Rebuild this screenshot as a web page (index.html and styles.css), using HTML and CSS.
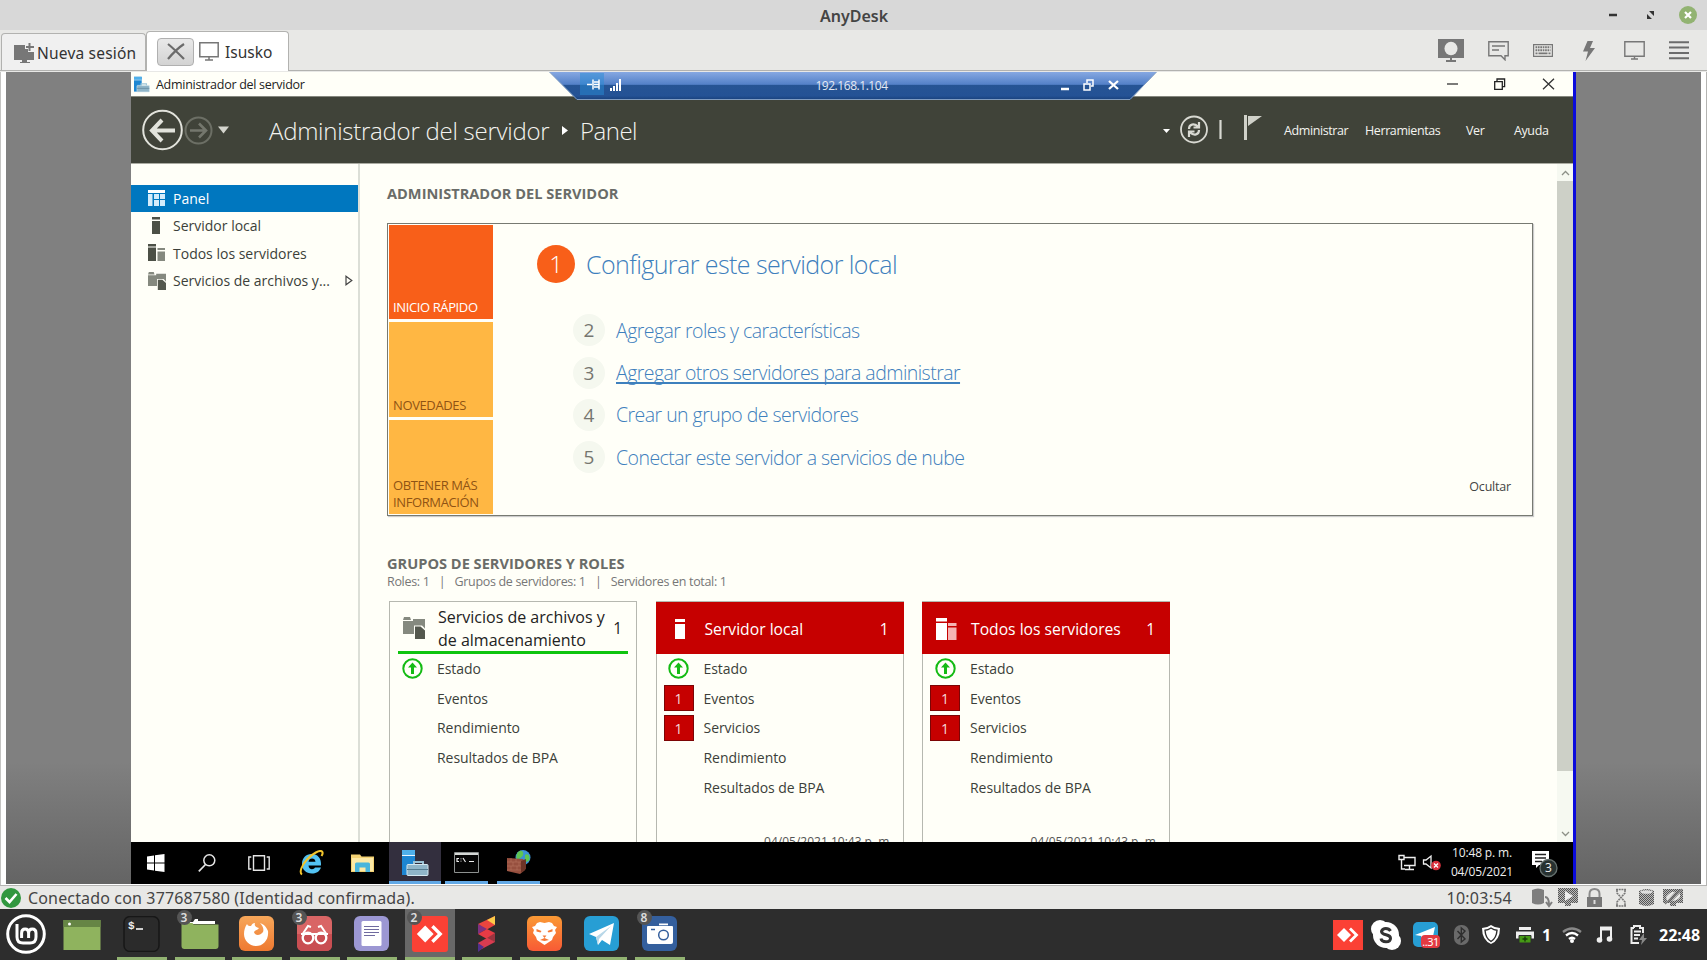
FILE: index.html
```html
<!DOCTYPE html>
<html lang="es">
<head>
<meta charset="utf-8">
<title>AnyDesk</title>
<link rel="stylesheet" href="styles.css">
</head>
<body>
<svg class="defs" width="0" height="0">
  <symbol id="srv" viewBox="0 0 27 26"><path d="M0 0h13v25H0z" fill="#1d86d2"/><path d="M0 0h13v5H0z" fill="#4fb0ea"/><path d="M0 5.500h13" stroke="#e8f6ff"/><path d="M12 15v-3h9v3" fill="none" stroke="#9cc4d6" stroke-width="2"/><rect x="5" y="14.500" width="21" height="11" rx="1" fill="#8fb5c8" stroke="#d5e8f0"/><path d="M5 19.500h21" stroke="#557c90"/></symbol>
  <symbol id="arrowup" viewBox="0 0 21 21"><circle cx="10.500" cy="10.500" r="9.200" fill="#fffff8" stroke="#14bb14" stroke-width="2"/><path d="M10.500 4.500l4.500 5h-3v6.500h-3V9.500H6z" fill="#14bb14"/></symbol>
  <symbol id="files" viewBox="0 0 22 22"><path d="M1 0h6l1 3H0zM0 4h10V2h12v15H0z" fill="#85897f"/><path d="M11 8.500h8l3 3V22H11z" fill="#fffff8"/><path d="M12 9.500h5.500l4.500 4V22H12z" fill="#54584e"/></symbol>
  <symbol id="anydesk" viewBox="0 0 30 30"><path d="M0 0h30v30H0z" fill="#fb4135"/><path d="M11 8l7 7-7 7-7-7z" fill="#fff"/><path d="M17 8.500l6.500 6.500-6.500 6.500" fill="none" stroke="#fff" stroke-width="2.800"/></symbol>
</svg>

<header class="titlebar">
  <span class="title">AnyDesk</span>
  <svg class="wm" width="90" height="20" viewBox="0 0 90 20"><path d="M2 10h8" stroke="#333" stroke-width="2.500"/><path d="M42 6h5v5zM40 9v5h5z" fill="#333"/><circle cx="81" cy="10" r="9" fill="#92b372"/><path d="M78 7l6 6m0-6l-6 6" stroke="#fff" stroke-width="2.200"/></svg>
</header>

<nav class="tabs">
  <div class="tab tab-new">
    <svg width="21" height="20" viewBox="0 0 21 20"><path d="M0 2h11v4h3v3h6v8H0zM8 17h5v2h3v1H6v-1h2z" fill="#777"/><path d="M15.500 0v8M12 4h8" stroke="#777" stroke-width="2"/></svg>
    <span>Nueva sesión</span>
  </div>
  <div class="tab tab-on">
    <span class="close"><svg width="18" height="17" viewBox="0 0 18 17"><path d="M1 1c5 4 10 9 16 15M17 1C11 5 6 10 1 16" stroke="#6b6b6b" stroke-width="2.200" fill="none"/></svg></span>
    <svg class="mon" width="20" height="19" viewBox="0 0 20 19"><path d="M.8.800h18.400v14H.8zM10 15v3M6 18h8" fill="none" stroke="#777" stroke-width="1.500"/></svg>
    <span>Isusko</span>
  </div>
  <div class="tools">
    <svg width="26" height="23" viewBox="0 0 26 23"><path d="M0 0h26v19H0z" fill="#777"/><ellipse cx="13" cy="9.500" rx="6.500" ry="6.800" fill="#e8e8e6"/><path d="M13 18v4M8 22h10" stroke="#777" stroke-width="2"/></svg>
    <svg width="21" height="20" viewBox="0 0 21 20"><path d="M.8.800h19.400v14H17v4l-4-4H.8zM4 5h13M4 9h7" fill="none" stroke="#777" stroke-width="1.400"/></svg>
    <svg width="20" height="13" viewBox="0 0 20 13"><path d="M.6.600h18.800v11.800H.6z" fill="none" stroke="#777" stroke-width="1.200"/><path d="M2.500 3.300h15M2.500 6.300h15" stroke="#777" stroke-width="1.900" stroke-dasharray="1.700 .7"/><path d="M2.500 9.400h2m1 0h9m1 0h2" stroke="#777" stroke-width="1.800"/></svg>
    <svg width="12" height="20" viewBox="0 0 12 20"><path d="M4.500 0H10L7 7h5L2.500 20 5 10.500H0z" fill="#777"/></svg>
    <svg width="21" height="19" viewBox="0 0 21 19"><path d="M.8.800h19.400v14.500H.8zM10.500 15v3M7 18h7" fill="none" stroke="#777" stroke-width="1.400"/></svg>
    <svg width="20" height="19" viewBox="0 0 20 19"><path d="M0 1.200h20M0 6.600h20M0 12h20M0 17.300h20" stroke="#6c6c6c" stroke-width="2"/></svg>
  </div>
</nav>

<main class="viewport">
  <section class="remote">
    <div class="wintitle">
      <svg width="16" height="17"><use href="#srv"/></svg>
      <span>Administrador del servidor</span>
      <svg class="winbtn" width="108" height="12" viewBox="0 0 108 12"><path d="M0 6h11" stroke="#333" stroke-width="1.300"/><path d="M47.700 3.700h7.600v7.600h-7.600zM50 3.500V1h7.600v7.600H55.500" fill="none" stroke="#222" stroke-width="1.300"/><path d="M96 .8l11 10.400M107 .8L96 11.200" stroke="#333" stroke-width="1.300"/></svg>
      <div class="rdp">
        <svg class="rdpshape" width="608" height="28" viewBox="0 0 608 28"><defs><linearGradient id="rg" x1="0" y1="0" x2="0" y2="1"><stop offset="0" stop-color="#86a8e2"/><stop offset=".44" stop-color="#5481c8"/><stop offset=".48" stop-color="#265494"/><stop offset=".85" stop-color="#245295"/><stop offset="1" stop-color="#173f79"/></linearGradient></defs><path d="M.5 0h607L581 28H28z" fill="url(#rg)"/><path d="M.5 0L28 27.500h553L607.500 0" fill="none" stroke="#809cc0"/><path d="M31 1h24v22H31z" fill="#278bd5" opacity=".5"/><path d="M38 12.500h5m1-5v10m1-5h5m0-5v10M45 10h5m-5 5h5" stroke="#fff" stroke-width="1.500"/><path d="M62 19v-3m3 3v-5m3 5V11m3 8V7" stroke="#fff" stroke-width="2"/><path d="M512 17h8" stroke="#fff" stroke-width="2.500"/><path d="M535 12h6v6h-6zm3-1V8h6v6h-2" fill="none" stroke="#fff" stroke-width="1.500"/><path d="M560 9l9 8m0-8l-9 8" stroke="#fff" stroke-width="2.300"/></svg>
        <span class="ip">192.168.1.104</span>
      </div>
    </div>

    <div class="head">
      <svg width="98" height="42" viewBox="0 0 98 42"><circle cx="20.500" cy="21" r="19.300" fill="none" stroke="#e2e3dc" stroke-width="2"/><path d="M9.500 21.500H33M20 11L10 21.500 20 32" fill="none" stroke="#e2e3dc" stroke-width="4"/><circle cx="56.500" cy="21.500" r="13" fill="none" stroke="#6c6f65" stroke-width="2"/><path d="M48 21.500h15M57 14.500l7 7-7 7" fill="none" stroke="#74776d" stroke-width="2.600"/><path d="M76 17.500h11l-5.500 7z" fill="#d4d5ce"/></svg>
      <h1>Administrador del servidor</h1>
      <svg class="crumb" width="6" height="9" viewBox="0 0 6 9"><path d="M0 0l6 4.500L0 9z" fill="#fff"/></svg>
      <span class="where">Panel</span>
      <svg class="status" width="100" height="32" viewBox="0 0 100 32"><path d="M0 15h7l-3.500 4z" fill="#fff"/><circle cx="31" cy="15.500" r="13" fill="none" stroke="#d8d9d2" stroke-width="1.800"/><path d="M26 15c0-5 5-6 9-2.500M36 16c0 5-5 6-9 2.500M36 8v5.500h-5.500M26 23v-5.500h5.500" fill="none" stroke="#d8d9d2" stroke-width="2.200"/><path d="M57.500 6v19" stroke="#d8d9d2" stroke-width="2.200"/><path d="M81 1h3v25h-3zM85 2h14L85 12z" fill="#d0d1c9"/></svg>
      <span class="m m1">Administrar</span><span class="m m2">Herramientas</span><span class="m m3">Ver</span><span class="m m4">Ayuda</span>
    </div>

    <div class="body">
      <aside class="side">
        <div class="nav on"><svg width="18" height="17" viewBox="0 0 18 17"><path d="M0 0h17v3H0z" fill="#fff"/><path d="M0 4h4.500v12H0zM6 4h5v5H6zM12 4h5v5h-5zM6 10h5v6H6zM12 10h5v6h-5z" fill="#d4ecfb"/></svg><span>Panel</span></div>
        <div class="nav"><svg width="18" height="18" viewBox="0 0 18 18"><path d="M4 0h8v2.500H4zM4 4h8v13H4z" fill="#4c5046"/></svg><span>Servidor local</span></div>
        <div class="nav"><svg width="18" height="18" viewBox="0 0 18 18"><path d="M0 0h8v2.500H0zM0 3.500h8V17H0z" fill="#4c5046"/><path d="M9.500 4H17v2H9.500zM9.500 7.500H17V17H9.500z" fill="#85897f"/></svg><span>Todos los servidores</span></div>
        <div class="nav"><svg width="18" height="18"><use href="#files"/></svg><span>Servicios de archivos y...</span><svg class="more" width="8" height="11" viewBox="0 0 8 11"><path d="M1 1.300L6.800 5.500 1 9.700z" fill="none" stroke="#444" stroke-width="1.200"/></svg></div>
      </aside>

      <div class="content">
        <h2 class="h-a">ADMINISTRADOR DEL SERVIDOR</h2>
        <div class="welcome">
          <div class="tiles">
            <div class="tile hot"><span>INICIO RÁPIDO</span></div>
            <div class="tile"><span>NOVEDADES</span></div>
            <div class="tile"><span>OBTENER MÁS<br>INFORMACIÓN</span></div>
          </div>
          <div class="steps">
            <div class="first"><b>1</b><a>Configurar este servidor local</a></div>
            <div class="step"><b>2</b><a>Agregar roles y características</a></div>
            <div class="step"><b>3</b><a class="hover">Agregar otros servidores para administrar</a></div>
            <div class="step"><b>4</b><a>Crear un grupo de servidores</a></div>
            <div class="step"><b>5</b><a>Conectar este servidor a servicios de nube</a></div>
          </div>
          <span class="hide">Ocultar</span>
        </div>

        <h2 class="h-b">GRUPOS DE SERVIDORES Y ROLES</h2>
        <div class="totals"><span>Roles: 1</span><i>|</i><span>Grupos de servidores: 1</span><i>|</i><span>Servidores en total: 1</span></div>
        <div class="cards">
          <div class="card ok">
            <div class="chead"><svg width="22" height="22"><use href="#files"/></svg><span class="ct">Servicios de archivos y<br>de almacenamiento</span><span class="num">1</span></div>
            <div class="row"><svg width="21" height="21"><use href="#arrowup"/></svg><span>Estado</span></div>
            <div class="row"><span>Eventos</span></div>
            <div class="row"><span>Rendimiento</span></div>
            <div class="row"><span>Resultados de BPA</span></div>
          </div>
          <div class="card bad">
            <div class="chead"><svg width="22" height="22" viewBox="0 0 22 22"><path d="M5 1h10v3H5zM5 6h10v15H5z" fill="#fff"/></svg><span class="ct">Servidor local</span><span class="num">1</span></div>
            <div class="row"><svg width="21" height="21"><use href="#arrowup"/></svg><span>Estado</span></div>
            <div class="row"><em>1</em><span>Eventos</span></div>
            <div class="row"><em>1</em><span>Servicios</span></div>
            <div class="row"><span>Rendimiento</span></div>
            <div class="row"><span>Resultados de BPA</span></div>
            <div class="stamp">04/05/2021 10:43 p. m.</div>
          </div>
          <div class="card bad">
            <div class="chead"><svg width="22" height="22" viewBox="0 0 22 22"><path d="M0 0h11v3.500H0zM0 5h11v17H0z" fill="#fff"/><path d="M12 5h8.500v3H12zM12 9.500h8.500V22H12z" fill="#f5b5b5"/></svg><span class="ct">Todos los servidores</span><span class="num">1</span></div>
            <div class="row"><svg width="21" height="21"><use href="#arrowup"/></svg><span>Estado</span></div>
            <div class="row"><em>1</em><span>Eventos</span></div>
            <div class="row"><em>1</em><span>Servicios</span></div>
            <div class="row"><span>Rendimiento</span></div>
            <div class="row"><span>Resultados de BPA</span></div>
            <div class="stamp">04/05/2021 10:43 p. m.</div>
          </div>
        </div>
      </div>

      <div class="scroll">
        <svg width="9" height="6" viewBox="0 0 9 6"><path d="M1 5l3.500-3.500L8 5" fill="none" stroke="#8c9087" stroke-width="1.300"/></svg>
        <div class="thumb"></div>
        <svg width="9" height="6" viewBox="0 0 9 6"><path d="M1 1l3.500 3.500L8 1" fill="none" stroke="#8c9087" stroke-width="1.300"/></svg>
      </div>
    </div>

    <div class="wbar">
      <div class="wi"><svg width="18" height="18" viewBox="0 0 18 18"><path d="M0 2.500L7 1.500v7H0zM8 1.300L17.500 0v8.500H8zM0 9.500h7v7l-7-1zM8 9.500h9.500V18L8 16.700z" fill="#fff"/></svg></div>
      <div class="wi"><svg width="18" height="18" viewBox="0 0 18 18"><circle cx="11.300" cy="6.300" r="5.500" fill="none" stroke="#e6e6e6" stroke-width="1.500"/><path d="M7.500 10.500L.8 17.300" stroke="#e6e6e6" stroke-width="1.700"/></svg></div>
      <div class="wi"><svg width="22" height="16" viewBox="0 0 22 16"><path d="M5.500.800h11v14.400h-11zM3.300 2H.8v12h2.500M18.700 2h2.500v12h-2.500" fill="none" stroke="#e6e6e6" stroke-width="1.400"/></svg></div>
      <div class="wi"><svg width="26" height="26" viewBox="0 0 26 26"><path d="M23 17.500c-1.500 4.500-5.500 6-9 6-6 0-10-4-10-9.500C4 8 8 4 13.500 4 20 4 23.500 8.500 23 15.500H10.500c.3 2.500 1.500 3.700 3.500 3.700 1.500 0 2.300-.6 3-1.700zM10.500 11.800h7c-.2-2.300-1.500-3.400-3.400-3.400s-3.300 1.100-3.600 3.400z" fill="#53c3f3"/><path d="M4 24.500c-3-2-.5-9 5-15S22-.5 24 1.500c1 1 .5 3-.5 4.500" fill="none" stroke="#f3c52c" stroke-width="2"/></svg></div>
      <div class="wi"><svg width="24" height="20" viewBox="0 0 24 20"><path d="M0 1.500h9l1.500 2H23V19H0z" fill="#f4d273"/><path d="M1 5h21v13H1z" fill="#fde9a6"/><path d="M4 19V11q0-1.500 1.500-1.500h12q1.500 0 1.500 1.500v8h-4.500v-4.500h-6V19z" fill="#49b5dc"/></svg></div>
      <div class="wi act"><svg width="27" height="26"><use href="#srv"/></svg></div>
      <div class="wi run"><svg width="25" height="21" viewBox="0 0 25 21"><path d="M.5.500h24v20H.5z" fill="#050505" stroke="#8d9190"/><path d="M1 2h23" stroke="#d5d8d6" stroke-width="2"/><path d="M5 6.500H3v3h2M7 6.500v.8m0 1.500v.8M9 6l2.500 4M15 9.500h5" stroke="#eee" stroke-width="1.200" fill="none"/></svg></div>
      <div class="wi run"><svg width="25" height="25" viewBox="0 0 25 25"><circle cx="17" cy="7.500" r="7.500" fill="#3b93d8"/><path d="M12 2c4-3 6 0 5 3s-4 3-5 5-3-4 0-8zM19 5c3-2 5 1 4.500 4s-4 4-4.500 1z" fill="#5fc653"/><path d="M1 8l16 1 2 3v8l-5 4-13-3z" fill="#97503f"/><path d="M1 12h17M1 16h17M1 20h14M5 8v4m5-3v3M7 12v4m6-4v4M5 16v4m6-4v4" stroke="#b5735f" stroke-width=".6"/><path d="M15 11l5-2v10l-5 4z" fill="#6e3427"/></svg></div>
      <div class="wtray">
        <svg width="44" height="18" viewBox="0 0 44 18"><path d="M6 3.500h11v8H6M11.500 12v3M7 15.500h9M1 1.500h5v4H1zM3.500 6v9H7" fill="none" stroke="#eee" stroke-width="1.400"/><path d="M25.500 6h2.500l5-4v12l-5-4h-2.500z" fill="none" stroke="#eee" stroke-width="1.300"/><circle cx="38" cy="11.500" r="4.800" fill="#d9303c"/><path d="M36 9.500l4 4m0-4l-4 4" stroke="#fff" stroke-width="1.300"/></svg>
        <div class="wclock"><span>10:48 p. m.</span><span>04/05/2021</span></div>
        <div class="note"><svg width="28" height="28" viewBox="0 0 28 28"><path d="M1 0h17v14H8l-3 3v-3H1z" fill="#fff"/><path d="M4 3.500h11M4 7h11M4 10.500h7" stroke="#222" stroke-width="1.300"/><circle cx="17.500" cy="17" r="8.500" fill="#273130" stroke="#65706e" stroke-width="1.300"/></svg><span>3</span></div>
      </div>
    </div>
  </section>
</main>

<footer class="statusbar">
  <svg width="20" height="20" viewBox="0 0 20 20"><circle cx="10" cy="10" r="10" fill="#31973f"/><path d="M4.500 10l4 4 7-8" fill="none" stroke="#fff" stroke-width="2.600"/></svg>
  <span class="conn">Conectado con 377687580 (Identidad confirmada).</span>
  <span class="elapsed">10:03:54</span>
  <svg class="sticons" width="152" height="20" viewBox="0 0 152 20"><defs><pattern id="dots" width="2" height="2" patternUnits="userSpaceOnUse"><path d="M0 0h1v1H0zM1 1h1v1H1z" fill="#555"/><path d="M1 0h1v1H1zM0 1h1v1H0z" fill="#bbb"/></pattern></defs>
    <path d="M0 2q6-3 12 0v13q-6 3-12 0z" fill="#7e7e7e"/><path d="M13 9q4 0 4 8m-3-3l3 4 3-4" stroke="#7e7e7e" stroke-width="2" fill="none"/>
    <path d="M26 0h20v15h-7v3h-6v-3h-7z" fill="url(#dots)"/><path d="M33 3l8 5-8 5z" fill="#eee"/>
    <path d="M55 9h15v10H55z" fill="#777"/><path d="M57.500 9V6q0-5 5-5t5 5v3" fill="none" stroke="#8a8a8a" stroke-width="2"/><path d="M62.500 12v4" stroke="#ddd" stroke-width="2"/>
    <path d="M84 1.500h10M84 18h10M85 2v3l8 9v4M93 2v3l-8 9v4" fill="none" stroke="#777" stroke-width="1.600" stroke-dasharray="2 .7"/>
    <path d="M107 3q8-4 15 0v13q-7 4-15 0z" fill="url(#dots)"/><ellipse cx="114.500" cy="4" rx="6" ry="1.800" fill="#ddd"/>
    <path d="M131 1h20v14h-7v3h-6v-3h-7z" fill="url(#dots)"/><path d="M134 9q5-6 9-5l-8 9zM148 5l-8 8q5 0 8-4z" fill="#e8e8e6"/><path d="M133 16L150 1" stroke="#777" stroke-width="1.300"/></svg>
</footer>

<div class="panel">
  <div class="logo"><svg width="40" height="40" viewBox="0 0 40 40"><circle cx="20" cy="20" r="18.300" fill="none" stroke="#fff" stroke-width="3"/><path d="M11 10v13q0 6 6 6h7q6 0 6-6v-4q0-4-3.700-4t-3.700 4v5m0-5q0-4-3.500-4t-3.500 4v5" fill="none" stroke="#fff" stroke-width="3"/></svg></div>
  <div class="app noline"><svg width="38" height="32" viewBox="0 0 38 32"><path d="M.5 1h37v30H.5z" fill="#8fb35e"/><path d="M.5 1h37v7H.5z" fill="#668545"/><circle cx="6.500" cy="5" r="1.500" fill="#fff"/></svg></div>
  <div class="app"><svg width="38" height="36" viewBox="0 0 38 36"><rect x="1" y=".5" width="35" height="35" rx="6" fill="#2b2b2b" stroke="#171717" stroke-width="1.500"/><path d="M13 13h7" stroke="#eee" stroke-width="1.700"/><text x="5" y="13" fill="#eee" font-size="11" font-family="Liberation Mono" font-weight="bold">$</text></svg></div>
  <div class="app"><svg width="38" height="36" viewBox="0 0 38 36"><path d="M8 6h4l2-3h3v2h17v3H8z" fill="#fff"/><path d="M.5 7h11l1 1.500h25V30q0 3-3 3h-31q-3 0-3-3z" fill="#8fb35e"/></svg><span class="badge">3</span></div>
  <div class="app"><svg width="36" height="36" viewBox="0 0 36 36"><defs><linearGradient id="og" x2="0" y2="1"><stop stop-color="#f7a75a"/><stop offset="1" stop-color="#ee7931"/></linearGradient></defs><rect width="35" height="35" rx="6" fill="url(#og)"/><path d="M8 8c1 2 2 2 4 2 1-2 2-3 4-3-1 3 1 4 4 5-1 2-4 2-5 4 1 4 6 4 9 0 1-3 0-6-3-9 5 2 6 4 8 8 1 9-5 15-12 15S5 24 5 18c0-4 1-7 3-10z" fill="#fff"/></svg></div>
  <div class="app"><svg width="36" height="36" viewBox="0 0 36 36"><rect width="35" height="35" rx="6" fill="#d96565"/><path d="M0 18h35v11q0 6-6 6H6q-6 0-6-6z" fill="#c94e52"/><path d="M5 19l6-9 3 1M30 19l-6-9-3 1M4 18h27" fill="none" stroke="#fff" stroke-width="2"/><circle cx="11" cy="22" r="5.300" fill="none" stroke="#fff" stroke-width="2.300"/><circle cx="24" cy="22" r="5.300" fill="none" stroke="#fff" stroke-width="2.300"/></svg><span class="badge">3</span></div>
  <div class="app"><svg width="36" height="36" viewBox="0 0 36 36"><rect width="35" height="35" rx="6" fill="#9c97d3"/><rect x="7.500" y="5" width="20" height="25" rx="1.500" fill="#fff"/><path d="M10 10.500h15M10 13.500h15M10 16.500h15M10 19.500h11" stroke="#6f6a9f" stroke-width="1.200"/></svg></div>
  <div class="app cur"><svg class="rd" width="36" height="36"><use href="#anydesk"/></svg><span class="badge">2</span></div>
  <div class="app"><svg width="18" height="36" viewBox="0 0 18 36"><path d="M0 8L17 0v9L8 14z" fill="#e9453e"/><path d="M9 4l8-4v9z" fill="#fccb48"/><path d="M0 8l9 5-9 5z" fill="#7c3181"/><path d="M0 18l9-5 8 4v9l-8-3z" fill="#e63b45"/><path d="M9 22l8-5v9z" fill="#99343f"/><path d="M17 26L9 22 0 27v8z" fill="#d93c50"/><path d="M0 27l6 4-6 5z" fill="#50308c"/></svg></div>
  <div class="app"><svg width="36" height="36" viewBox="0 0 36 36"><defs><linearGradient id="bg" x2="0" y2="1"><stop stop-color="#fa9a35"/><stop offset="1" stop-color="#f85a35"/></linearGradient></defs><rect width="35" height="35" rx="6" fill="url(#bg)"/><path d="M10 7l3-1 4.500 1L22 6l3 1 2 3 3 1-2 3 1 3-3 4-1 3-7.500 5L10 24l-1-3-3-4 1-3-2-3 3-1z" fill="#fff"/><path d="M9.500 13l5 2-1 1.500-4-1zM25.500 13l-5 2 1 1.500 4-1zM15.500 19.500h4l-2 2.500zM13 24l4.500-2 4.500 2-4.500 1z" fill="#f67835"/></svg></div>
  <div class="app"><svg width="36" height="36" viewBox="0 0 36 36"><rect width="35" height="35" rx="6" fill="#279ed4"/><path d="M5 18L30 7l-4 22-8-5-4 5-2-8z" fill="#fff"/><path d="M12 21L27 10 15 23l-1 6z" fill="#b8d7e8"/></svg></div>
  <div class="app"><svg width="36" height="36" viewBox="0 0 36 36"><rect width="35" height="35" rx="6" fill="#345f9d"/><path d="M6 10h24q1 0 1 1v15q0 2-2 2H7q-2 0-2-2V11q0-1 1-1zM17 7.500h9v1.800h-9z" fill="#fff"/><circle cx="21.500" cy="19" r="4.800" fill="none" stroke="#345f9d" stroke-width="1.500"/><path d="M9 13.500h4" stroke="#345f9d" stroke-width="1.500"/></svg><span class="badge">8</span></div>

  <div class="tray">
    <svg width="30" height="30"><use href="#anydesk"/></svg>
    <svg class="sk" width="30" height="30" viewBox="0 0 30 30"><circle cx="15" cy="15" r="13" fill="#fff"/><circle cx="9" cy="9" r="9" fill="#fff"/><circle cx="21" cy="21" r="9" fill="#fff"/><path d="M19.500 11q-1.500-2.500-4.700-2.500t-4.300 2.700q0 2.500 4.500 3.500t4.500 3.500q0 3.500-4.500 3.500t-5-3.200" fill="none" stroke="#333" stroke-width="3"/></svg>
    <div class="tg"><svg width="26" height="26" viewBox="0 0 26 26"><rect width="25" height="25" rx="5" fill="#279ed4"/><path d="M2 13L22 5l-3 14-6-3-3 3-2-5z" fill="#fff"/></svg><span>..31</span></div>
    <svg class="bt" width="15" height="20" viewBox="0 0 15 20"><rect width="15" height="20" rx="7" fill="#6a6a6a"/><path d="M3.500 6l7.500 8-3.700 3V3L11 6l-7.500 8" fill="none" stroke="#2e2e2e" stroke-width="1.400"/></svg>
    <svg class="sh" width="20" height="21" viewBox="0 0 20 21"><path d="M10 1q4 3 9 3 0 12-9 16Q1 16 1 4q5 0 9-3z" fill="#fff"/><path d="M10 4q3 2 6 2.300-.5 8-6 11.200Q4.500 14.300 4 6.300 7 6 10 4z" fill="#fff" stroke="#2d2d2d" stroke-width="1.400"/></svg>
    <svg class="pr" width="18" height="18" viewBox="0 0 18 18"><path d="M3 1h12v3H3zM0 5.500h18v7H0z" fill="#eee"/><path d="M3 9.500h12V17H3z" fill="#459a15" stroke="#2d2d2d"/><path d="M9 10.500v5M6.500 13h5" stroke="#183f09" stroke-width="1.500"/></svg>
    <span class="one">1</span>
    <svg class="wf" width="20" height="16" viewBox="0 0 20 16"><path d="M1 5q9-7 18 0" stroke="#888" fill="none" stroke-width="2.300"/><path d="M4 8.500q6-5 12 0M7 12q3-2.500 6 0" stroke="#fff" fill="none" stroke-width="2.300"/><circle cx="10" cy="14" r="2" fill="#fff"/></svg>
    <svg class="mu" width="17" height="17" viewBox="0 0 17 17"><path d="M5 14V1.500h10V13" fill="none" stroke="#eee" stroke-width="2"/><path d="M5 3h10" stroke="#eee" stroke-width="3"/><circle cx="3.500" cy="14" r="2.800" fill="#eee"/><circle cx="13.500" cy="13" r="2.800" fill="#eee"/></svg>
    <svg class="ba" width="18" height="20" viewBox="0 0 18 20"><path d="M4 3V1h6v2h3v5M4 3H1.500v15H9" fill="none" stroke="#eee" stroke-width="2"/><path d="M4 6.500h7m-7 3.500h6m-6 3.500h4" stroke="#eee" stroke-width="2"/><path d="M14 8l-5 7h3l-1 5 6-7h-3z" fill="#888"/></svg>
    <span class="clock">22:48</span>
  </div>
</div>
</body>
</html>
```
FILE: styles.css
```css
* { box-sizing: border-box; }
body { margin: 0; width: 1707px; height: 960px; overflow: hidden; display: flex; flex-direction: column; background: #e8e8e6; font-family: "Open Sans", "Noto Sans", sans-serif; color: #333; }
svg { display: block; flex: none; }
span, a, h1, h2 { white-space: nowrap; }
.defs { position: absolute; }
use { width: 100%; height: 100%; }

.titlebar { height: 30px; flex: none; background: #d8d8d8; display: flex; align-items: center; }
.title { flex: 1; text-align: center; padding: 2px 0 0 101px; font: 600 16px/27px "Noto Sans", sans-serif; color: #444; }
.wm { margin-right: 10px; }

.tabs { height: 41px; flex: none; display: flex; align-items: flex-end; border-bottom: 1px solid #b2b2b0; font: 15.500px/20px "Noto Sans", sans-serif; padding-left: 1px; }
.tab { display: flex; align-items: center; border: 1px solid #b2b2b0; border-bottom: 0; border-radius: 4px 4px 0 0; }
.tab-new { width: 145px; height: 37px; background: #f0f0f0; padding-left: 12px; gap: 2px; letter-spacing: .2px; padding-top: 1px; }
.tab-on { width: 143px; height: 40px; margin-bottom: -1px; background: #fff; padding-left: 10px; }
.close { width: 37px; height: 28px; display: flex; align-items: center; justify-content: center; border: 1px solid #b0b0b0; border-radius: 4px; background: linear-gradient(#e9e9e9, #d3d3d3); }
.mon { margin: 0 6px 0 5px; }
.tools { margin-left: auto; height: 40px; display: flex; align-items: center; gap: 24px; padding-right: 18px; padding-top: 1px; }
.tools svg:nth-child(4) { margin: 0 5px 0 6px; }

.viewport { height: 813px; flex: none; margin: 1px 0 0; border-left: 1px solid #c4c4c2; border-right: 1px solid #b4b4b2; padding: 0 5px; background: #fff; display: flex; }
.viewport::before, .viewport::after { content: ""; height: 812px; background: linear-gradient(#808080 85%, #646464); }
.viewport::before { width: 125px; }
.viewport::after { flex: 1; }
.remote { width: 1445px; height: 812px; border-right: 3px solid #0b0bdc; background: #fffff8; display: flex; flex-direction: column; }

.wintitle { position: relative; height: 25px; flex: none; display: flex; align-items: center; padding-left: 3px; border-bottom: 1px solid #85877e; font-size: 12.500px; line-height: 24px; color: #222; }
.wintitle > span { margin-left: 6px; padding-top: 2px; letter-spacing: -.28px; }
.winbtn { margin-left: auto; margin-right: 18px; }
.rdp { position: absolute; left: 418px; top: 0; width: 608px; height: 28px; z-index: 2; }
.rdpshape { position: absolute; }
.ip { position: relative; display: block; text-align: center; padding-right: 3px; line-height: 27px; font-size: 12px; letter-spacing: -.45px; color: #e4eaf4; }

.head { height: 66px; flex: none; background: #404339; display: flex; align-items: center; color: #f4f4f0; padding-left: 11px; }
.head h1, .where { font-size: 24px; font-weight: 300; line-height: 66px; padding-top: 2px; margin: 0; }
.head h1 { width: 281px; margin-left: 29px; letter-spacing: -.26px; }
.where { letter-spacing: -.5px; }
.crumb { margin: 0 12px; }
.status { margin-left: auto; }
.m { font-size: 12.500px; line-height: 66px; letter-spacing: -.4px; padding-top: 2px; }
.m1 { width: 65px; margin-left: 21px; }
.m2 { width: 75px; margin-left: 16px; }
.m3 { width: 19px; margin-left: 26px; }
.m4 { width: 36px; margin: 0 23px 0 29px; }

.body { flex: 1; min-height: 0; display: flex; border-top: 1px solid #aaaba2; }
.side { width: 229px; border-right: 2px solid #dcdfd7; padding-top: 20.500px; flex: none; }
.nav { height: 27.500px; display: flex; align-items: center; padding: 0 5px 0 17px; gap: 7px; font-size: 14px; color: #3c3f3a; }
.nav.on { background: #0077bf; color: #fff; }
.more { margin-left: auto; }

.content { flex: 1; padding: 19px 0 0 27px; overflow: hidden; }
.content h2 { margin: 0; font-size: 14.600px; line-height: 20px; font-weight: 700; color: #6a6c68; }
.welcome { width: 1146px; height: 293px; margin: 20px 0 0; border: 1px solid #777a72; box-shadow: 1px 1px 1px #ccc; display: flex; padding: 1px; }
.content h2.h-b { margin-top: 37px; }
.tiles { width: 104px; display: grid; grid-template-rows: repeat(3, 1fr); gap: 3px; }
.tile { background: #ffb743; color: #8f5313; display: flex; align-items: flex-end; padding: 0 0 3px 4px; font-size: 13px; line-height: 17px; letter-spacing: -.38px; }
.tile.hot { background: #f85f19; color: #fff; }
.steps { width: 600px; padding: 18px 0 0 44px; color: #3e80bd; }
.steps b { font-weight: 300; letter-spacing: 0; border-radius: 50%; text-align: center; flex: none; }
.first { display: flex; align-items: center; gap: 11px; height: 41px; margin-bottom: 25px; font-size: 25px; font-weight: 300; letter-spacing: -.57px; }
.first b { width: 38px; height: 38px; line-height: 38px; background: #f85f19; color: #fff; font-size: 24px; }
.first a { padding-top: 1px; }
.step { display: flex; align-items: center; height: 42.400px; padding-left: 36px; gap: 11px; font-size: 19.500px; font-weight: 300; letter-spacing: -.54px; }
.step b { width: 32px; height: 32px; line-height: 32px; background: #f5f8ef; color: #75766f; font-size: 19px; font-weight: 400; }
.hover { text-decoration: underline; text-decoration-thickness: 1.500px; text-underline-offset: 2px; text-decoration-skip-ink: none; }
.hide { margin-left: auto; align-self: flex-end; font-size: 12.500px; line-height: 18px; letter-spacing: -.2px; margin-right: 20px; margin-bottom: 18px; color: #444; }
.totals { display: flex; font-size: 12.500px; line-height: 18px; letter-spacing: -.32px; color: #777; }
.totals i { width: 25px; text-align: center; font-style: normal; }
.cards { display: flex; gap: 18.500px; padding: 10px 0 0 2px; }
.card { width: 248px; height: 300px; border: 1px solid #b6b8b0; flex: none; }
.chead { height: 52px; display: flex; align-items: center; padding: 0 14px 0 13px; font-size: 16px; line-height: 23px; color: #222; }
.ct { margin-left: 13px; flex: 1; }
.num { font-size: 15.500px; }
.ok .chead { position: relative; }
.ok .chead::after { content: ""; position: absolute; left: 8px; right: 8px; bottom: 0; height: 3.500px; background: #0fc40f; }
.ok .ct { padding-top: 1px; }
.bad .chead { background: #c60000; color: #fff; margin-left: -1px; margin-right: -1px; padding: 2px 15px 0 14px; }
.bad .ct { font-size: 15.700px; }
.row { height: 29.600px; display: grid; grid-template-columns: 30px auto; align-items: center; column-gap: 10px; padding-left: 7px; font-size: 14px; letter-spacing: -.05px; color: #3c3f3a; }
.row svg, .row em { grid-column: 1; justify-self: center; }
.row span { grid-column: 2; }
.row em { width: 30px; height: 26px; line-height: 25px; background: #c60000; border: 1px solid #7c0505; color: #f5dada; text-align: center; font-style: normal; }
.stamp { text-align: right; padding-right: 10px; margin-top: 30px; font-size: 12px; line-height: 20px; color: #555; }
.scroll { width: 16px; background: #f6f9f1; display: flex; flex-direction: column; align-items: center; padding: 6px 0 5px; }
.thumb { width: 16px; height: 590px; margin: 5px 0 auto; background: #cdd0c7; }

.wbar { height: 42px; flex: none; background: #000; display: flex; }
.wi { width: 52px; display: flex; align-items: center; justify-content: center; flex: none; }
.wi:first-child { width: 50px; }
.act { background: #332f3e; border-bottom: 3px solid #62a9e6; padding-top: 3px; }
.run { border-bottom: 3px solid #62a9e6; width: 43px; margin-left: 4px; padding-top: 2px; }
.run + .run { margin-left: 9px; }
.wtray { margin-left: auto; display: flex; align-items: center; color: #eee; padding-right: 14px; }
.wclock { display: flex; flex-direction: column; align-items: center; width: 64px; margin: 0 17px 1px 8px; font-size: 12px; line-height: 18.500px; letter-spacing: -.15px; }
.note { position: relative; margin-top: 4px; }
.note span { position: absolute; left: 14px; top: 8px; font-size: 12px; line-height: 18px; }

.statusbar { height: 24px; flex: none; border-top: 1px solid #b4b4b2; background: #e8e8e6; display: flex; align-items: center; padding: 0 23px 0 1px; font: 16px/22px "Noto Sans", sans-serif; color: #444; letter-spacing: .15px; }
.conn { margin-left: 7px; }
.elapsed { margin-left: auto; margin-right: 20px; letter-spacing: .25px; }

.panel { height: 51px; flex: none; background: #2d2d2d; display: flex; }
.logo { width: 54px; padding: 5px 0 0 6px; }
.app { position: relative; width: 50px; margin-right: 7.500px; padding-top: 7px; border-bottom: 3px solid #92b372; display: flex; justify-content: center; flex: none; }
.noline { border: 0; width: 56px; margin-right: 7px; padding-top: 10px; }
.cur { background: #686868; }
.rd { border-radius: 3px; }
.badge { position: absolute; left: 2px; top: 1px; width: 15px; height: 15px; border-radius: 50%; background: #555; color: #ddd; text-align: center; font: 600 12px/15px "Noto Sans", sans-serif; }
.tray { margin-left: auto; display: flex; align-items: center; padding-right: 4px; color: #fff; font: 700 16px/50px "Noto Sans", sans-serif; }
.sk { margin-left: 8px; }
.tg { position: relative; margin-left: 12px; }
.tg span { position: absolute; left: 8px; top: 13px; width: 19px; height: 13px; background: #e33a42; border-radius: 4px; font: 11px/13px "Noto Sans", sans-serif; text-align: center; letter-spacing: -.5px; }
.bt { margin-left: 15px; } .sh { margin-left: 12px; } .pr { margin-left: 15px; }
.one { margin-left: 8px; width: 9px; } .wf { margin-left: 11px; } .mu { margin-left: 14px; } .ba { margin-left: 17px; }
.clock { margin-left: 11px; width: 44px; }
```
